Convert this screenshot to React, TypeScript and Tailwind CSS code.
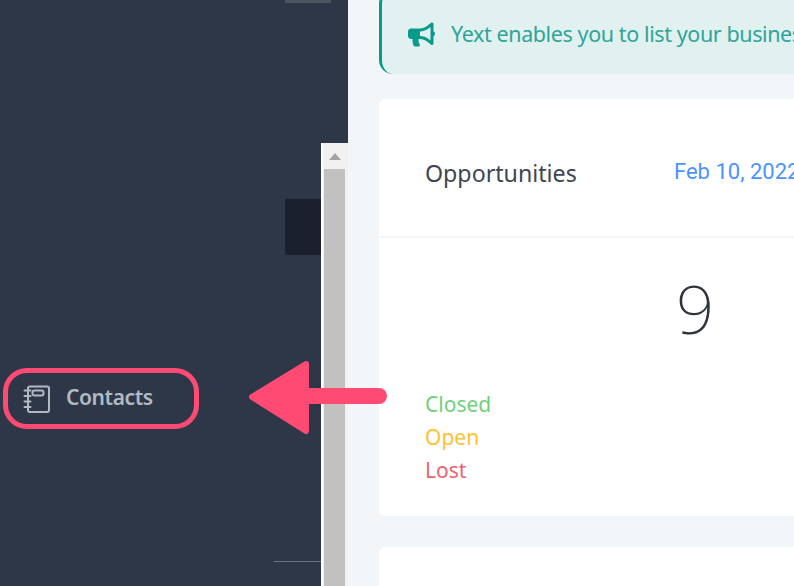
import { FaBullhorn } from 'react-icons/fa'

function NotebookIcon() {
  return (
    <svg width="28" height="28" viewBox="0 0 28 28" fill="none" stroke="#b3b9c3" strokeWidth="2" strokeLinecap="round" strokeLinejoin="round">
      <rect x="5" y="1.5" width="21" height="25.5" rx="2" />
      <rect x="9.5" y="5.5" width="11" height="5" rx="2" />
      <path d="M1.5 5.5h6M1.5 11h6M1.5 16.5h6M1.5 22h6" />
    </svg>
  )
}

function AnnotationArrow() {
  return (
    <svg className="absolute left-[245px] top-[357px]" width="146" height="81" viewBox="0 0 146 81">
      <path d="M60 39h74" stroke="#ff4a74" strokeWidth="16" strokeLinecap="round" />
      <path d="M61 7 L7 40 L61 74 Z" fill="#ff4a74" stroke="#ff4a74" strokeWidth="6" strokeLinejoin="round" />
    </svg>
  )
}

export default function App() {
  return (
    <div className="relative flex h-[586px] w-[794px] overflow-hidden bg-[#f2f6f9] font-['Noto_Sans',sans-serif]">
      <aside className="flex w-[348px] shrink-0 bg-[#2d3748]">
        <div className="w-[321px] shrink-0">
          <div className="ml-[285px] h-[3px] w-[46px] bg-[#4d5562]" />
          <div className="ml-[285px] mt-[196px] h-[56px] w-[36px] bg-[#1a202c]" />
          <div className="ml-[3px] mt-[113px] flex h-[61px] w-[196px] items-center gap-[15px] rounded-[24px] border-[5px] border-[#ff4a74] pl-[15px]">
            <NotebookIcon />
            <span className="-mt-px text-[21px] font-semibold tracking-[-0.4px] text-[#b3b9c3]">Contacts</span>
          </div>
          <div className="ml-[274px] mt-[132px] h-px w-[47px] bg-[#6b7280]" />
        </div>
        <div className="mt-[143px] flex w-[27px] flex-col border-l-2 border-white bg-[#f1f1f1] pr-[3px] pl-px">
          <div className="flex h-[26px] items-center justify-center">
            <div className="h-0 w-0 border-x-[6px] border-b-[7px] border-x-transparent border-b-[#a3a3a3]" />
          </div>
          <div className="flex-1 bg-[#c1c1c1]" />
        </div>
      </aside>

      <main className="min-w-0 flex-1 pl-[31px]">
        <div className="-mt-[10px] flex h-[84px] items-center gap-[16px] overflow-hidden whitespace-nowrap rounded-l-[14px] border-l-[3px] border-[#0a9a8c] bg-[#e0f1f0] pl-[26px] pt-[5px] text-[21.5px] tracking-[-0.4px] text-[#2fa499]">
          <FaBullhorn className="shrink-0 text-[#0a9a8c]" size={27} />
          <span>Yext enables you to list your business</span>
        </div>

        <section className="mt-[25px] h-[417px] rounded-l-md bg-white">
          <div className="flex h-[139px] items-center whitespace-nowrap border-b-2 border-[#f2f6f9] pl-[46px]">
            <span className="mt-[12px] w-[249px] shrink-0 text-[23.2px] text-[#3f4652]">Opportunities</span>
            <span className="mt-[8px] font-['Roboto',sans-serif] text-[22px] text-[#4b94ff]">Feb 10, 2022</span>
          </div>
          <div className="pl-[46px]">
            <div className="ml-[251px] mt-[20px] h-[130px] text-[67px] font-extralight leading-[100px] text-[#2f343b]">9</div>
            <div className="text-[21px] leading-[33px]">
              <div className="text-[#6fd17b]">Closed</div>
              <div className="text-[#ffc233]">Open</div>
              <div className="text-[#ec6270]">Lost</div>
            </div>
          </div>
        </section>

        <section className="mt-[31px] h-[60px] rounded-l-md bg-white" />
      </main>

      <AnnotationArrow />
    </div>
  )
}
